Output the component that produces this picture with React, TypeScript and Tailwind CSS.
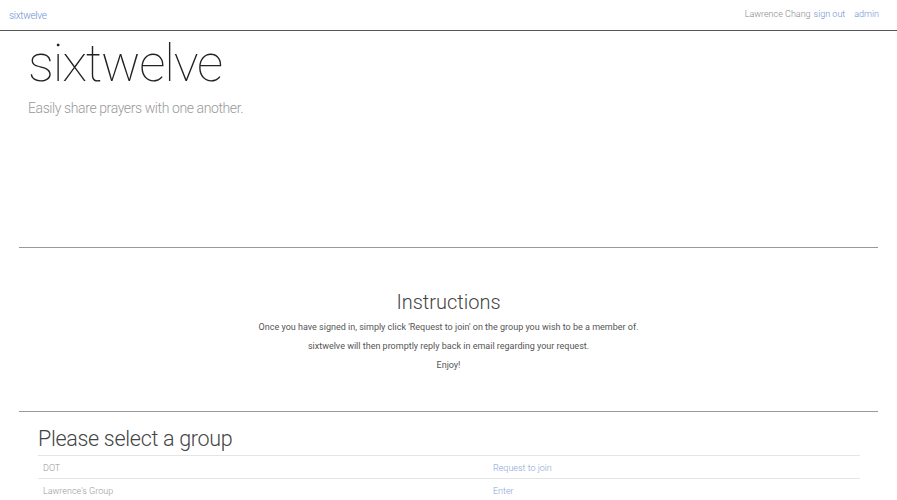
import React from 'react';

const groups = [
  { name: 'DOT', action: 'Request to join' },
  { name: "Lawrence's Group", action: 'Enter' },
];

const App = () => {
  return (
    <div className="min-h-[500px] bg-white text-[#333] font-['Roboto','Liberation_Sans',sans-serif]">
      <nav className="h-[31px] border-b border-[#555] flex items-center justify-between px-[9px] text-[10px] font-light">
        <a className="text-[#6d8fcf] tracking-[-0.3px]">sixtwelve</a>
        <div className="flex items-center pr-[9px] text-[9px]">
          <span className="text-[#888]">Lawrence Chang</span>
          <a className="text-[#6d8fcf] ml-[3px]">sign out</a>
          <a className="text-[#6d8fcf] ml-[9px]">admin</a>
        </div>
      </nav>

      <header className="h-[216px] pl-[28px] pt-[1px]">
        <h1 className="text-[52px] leading-[64px] font-thin text-[#222] tracking-[-1.2px]">sixtwelve</h1>
        <p className="mt-[2px] text-[14px] font-light text-[#999] tracking-[-0.4px]">Easily share prayers with one another.</p>
      </header>

      <hr className="mx-[19px] border-t border-[#999]" />

      <section className="h-[163px] flex flex-col items-center pt-[41px] text-center">
        <h2 className="text-[20px] leading-[26px] font-light text-[#444]">Instructions</h2>
        <p className="mt-[2px] text-[9px] leading-[20px] text-[#555]">
          Once you have signed in, simply click 'Request to join' on the group you wish to be a member of.
        </p>
        <p className="text-[9px] leading-[19px] text-[#555]">sixtwelve will then promptly reply back in email regarding your request.</p>
        <p className="text-[9px] leading-[19px] text-[#555]">Enjoy!</p>
      </section>

      <hr className="mx-[19px] border-t border-[#999]" />

      <section className="pl-[38px] pr-[37px] pt-[12px]">
        <h3 className="text-[21.5px] leading-[30px] font-light text-[#444] tracking-[-0.3px]">Please select a group</h3>
        <div className="mt-[1px]">
          {groups.map((g) => (
            <div key={g.name} className="grid grid-cols-[455px_1fr] h-[23px] items-center pt-[3px] border-t border-[#e5e5e5] text-[9px] font-light">
              <span className="pl-[5px] text-[#999]">{g.name}</span>
              <a className="text-[#8aa3d4]">{g.action}</a>
            </div>
          ))}
        </div>
      </section>
    </div>
  );
};

export default App;
